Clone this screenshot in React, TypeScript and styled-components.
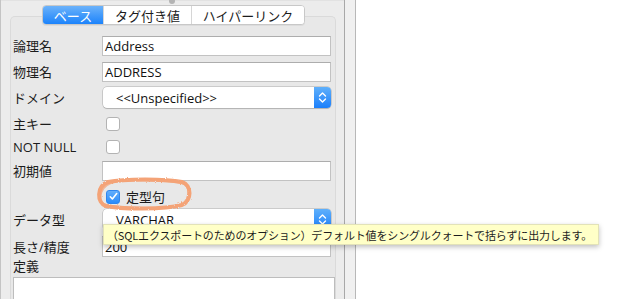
import * as React from "react";
import styled, { createGlobalStyle } from "styled-components";

const GlobalStyle = createGlobalStyle`
    html, body {
        margin: 0;
        padding: 0;
        background: #ffffff;
    }
    body {
        font-family: "Open Sans", "Noto Sans CJK JP", sans-serif;
        font-size: 13px;
        color: #1c1c1c;
    }
`;

const tabs = ["ベース", "タグ付き値", "ハイパーリンク"];
const tabWidths = [60, 87, 112];

const Stepper: React.FC = () => (
    <StepperBox>
        <svg width="9" height="13" viewBox="0 0 9 13">
            <path
                d="M1.5 5 L4.5 2 L7.5 5 M1.5 8 L4.5 11 L7.5 8"
                fill="none"
                stroke="#fff"
                strokeWidth="1.4"
                strokeLinecap="round"
                strokeLinejoin="round"
            />
        </svg>
    </StepperBox>
);

const Check: React.FC<{ checked?: boolean }> = ({ checked }) => (
    <CheckBox $checked={checked}>
        {checked && (
            <svg width="11" height="11" viewBox="0 0 11 11">
                <path
                    d="M2.3 5.8 L4.4 8 L8.7 2.6"
                    fill="none"
                    stroke="#fff"
                    strokeWidth="1.6"
                    strokeLinecap="round"
                    strokeLinejoin="round"
                />
            </svg>
        )}
    </CheckBox>
);

const App: React.FC = () => {
    return (
        <>
            <GlobalStyle />
            <Window>
                <LeftPane>
                    <SplitHandle>
                        <HandleDot />
                    </SplitHandle>
                    <TabView>
                        <Segmented>
                            {tabs.map((t, i) => (
                                <Segment key={t} $active={i === 0} $w={tabWidths[i]}>
                                    {t}
                                </Segment>
                            ))}
                        </Segmented>
                        <GroupBox>
                            <Form>
                                <Row $top={19} $h={20}>
                                    <Label>論理名</Label>
                                    <TextField>Address</TextField>
                                </Row>
                                <Row $top={6} $h={20}>
                                    <Label>物理名</Label>
                                    <TextField>ADDRESS</TextField>
                                </Row>
                                <Row $top={5} $h={21}>
                                    <Label>ドメイン</Label>
                                    <SelectBox>
                                        <SelectText>&lt;&lt;Unspecified&gt;&gt;</SelectText>
                                        <Stepper />
                                    </SelectBox>
                                </Row>
                                <Row $top={4} $h={23}>
                                    <Label>主キー</Label>
                                    <Check />
                                </Row>
                                <Row $top={0} $h={23}>
                                    <Label>NOT NULL</Label>
                                    <Check />
                                </Row>
                                <Row $top={3} $h={20}>
                                    <Label>初期値</Label>
                                    <TextField />
                                </Row>
                                <Row $top={6} $h={19}>
                                    <Label />
                                    <CheckLine>
                                        <Check checked />
                                        <span>定型句</span>
                                    </CheckLine>
                                </Row>
                                <Row $top={3} $h={21}>
                                    <Label>データ型</Label>
                                    <SelectBox>
                                        <SelectText>VARCHAR</SelectText>
                                        <Stepper />
                                    </SelectBox>
                                </Row>
                                <Row $top={6} $h={21}>
                                    <Label>長さ/精度</Label>
                                    <TextField>200</TextField>
                                </Row>
                                <Row $top={1} $h={16}>
                                    <Label>定義</Label>
                                </Row>
                                <TextArea />

                                <Ring width="100" height="34" viewBox="0 0 100 34">
                                    <defs>
                                        <filter id="crayon" x="-10%" y="-25%" width="120%" height="150%">
                                            <feTurbulence type="fractalNoise" baseFrequency="1.3" numOctaves="2" seed="5" />
                                            <feDisplacementMap in="SourceGraphic" scale="2.6" />
                                        </filter>
                                    </defs>
                                    <g filter="url(#crayon)" fill="none" stroke="#f4a377" strokeLinecap="round">
                                        <path
                                            d="M14 5 C30 1.5, 72 1.5, 88 5 C98 8, 98 24, 88 28 C70 32.5, 28 32.5, 12 29 C2.5 26, 2.5 9, 14 5 Z"
                                            strokeWidth="4"
                                        />
                                        <path
                                            d="M20 4 C36 2.5, 74 3, 90 6.5 C97 11, 96 25, 84 29.5 C64 32, 26 31.5, 10 27.5 C3.5 22, 5 8, 22 4.5"
                                            strokeWidth="2.2"
                                            opacity="0.75"
                                        />
                                    </g>
                                </Ring>

                                <Tooltip>
                                    （SQLエクスポートのためのオプション）デフォルト値をシングルクォートで括らずに出力します。
                                </Tooltip>
                            </Form>
                        </GroupBox>
                    </TabView>
                </LeftPane>
                <Divider />
                <RightPane />
            </Window>
        </>
    );
};

const Window = styled.div`
    display: flex;
    width: 623px;
    height: 299px;
    overflow: hidden;
    background: #fff;
`;

const LeftPane = styled.div`
    width: 344px;
    flex: none;
    display: flex;
    flex-direction: column;
    background: #ececec;
    border-left: 1px solid #c4c4c4;
    box-sizing: border-box;
`;

const SplitHandle = styled.div`
    position: relative;
    height: 6px;
    background: #f6f6f6;
    border-bottom: 1px solid #e2e2e2;
    box-sizing: border-box;
`;

const HandleDot = styled.div`
    position: absolute;
    left: 168px;
    top: -2px;
    width: 6px;
    height: 6px;
    border-radius: 50%;
    background: #b4b4b4;
`;

const TabView = styled.div`
    display: flex;
    flex-direction: column;
    padding: 4px 8px 0 9px;
    flex: 1;
`;

const Segmented = styled.div`
    position: relative;
    z-index: 2;
    display: flex;
    align-self: center;
    margin-left: 1px;
    height: 20px;
    background: #fff;
    border: 1px solid #c8c8c8;
    border-radius: 4px;
    box-shadow: 0 1px 0 rgba(0, 0, 0, 0.05);
    box-sizing: border-box;
    overflow: hidden;
`;

const Segment = styled.div<{ $active?: boolean; $w: number }>`
    width: ${(p) => p.$w}px;
    display: flex;
    align-items: center;
    justify-content: center;
    font-family: "Noto Sans CJK JP", sans-serif;
    font-size: 13px;
    line-height: 1;
    padding-top: 1px;
    color: ${(p) => (p.$active ? "#fff" : "#1c1c1c")};
    background: ${(p) =>
        p.$active ? "linear-gradient(#6bb2fa, #1c83fb)" : "#fff"};
    & + & {
        border-left: 1px solid #d6d6d6;
    }
`;

const GroupBox = styled.div`
    margin-top: -9px;
    flex: 1;
    background: #e8e8e8;
    border: 1px solid #dadada;
    border-bottom: none;
    border-radius: 5px 5px 0 0;
    padding: 0 0 0 2px;
    box-sizing: border-box;
`;

const Form = styled.div`
    position: relative;
    display: flex;
    flex-direction: column;
`;

const Row = styled.div<{ $top: number; $h: number }>`
    display: grid;
    grid-template-columns: 89px 229px;
    align-items: center;
    margin-top: ${(p) => p.$top}px;
    height: ${(p) => p.$h}px;
`;

const Label = styled.div`
    font-size: 13px;
    line-height: 16px;
    color: #1c1c1c;
    white-space: nowrap;
`;

const TextField = styled.div`
    height: 100%;
    box-sizing: border-box;
    background: #fff;
    border: 1px solid #c2c2c2;
    border-top-color: #adadad;
    padding: 0 2px;
    display: flex;
    align-items: center;
    font-size: 13px;
    line-height: 16px;
    color: #111;
`;

const SelectBox = styled.div`
    height: 100%;
    margin-left: 1px;
    box-sizing: border-box;
    display: flex;
    align-items: center;
    background: #fff;
    border-radius: 4px;
    box-shadow: 0 0 0 0.5px rgba(0, 0, 0, 0.25), 0 1px 1px rgba(0, 0, 0, 0.12);
    overflow: hidden;
`;

const SelectText = styled.span`
    flex: 1;
    padding-left: 13px;
    font-size: 13px;
    line-height: 16px;
    color: #111;
`;

const StepperBox = styled.div`
    width: 17px;
    height: 100%;
    display: flex;
    align-items: center;
    justify-content: center;
    background: linear-gradient(#5fb0fb, #1b7ffb);
`;

const CheckBox = styled.div<{ $checked?: boolean }>`
    width: 14px;
    height: 14px;
    margin-left: 4px;
    box-sizing: border-box;
    border-radius: 3px;
    display: flex;
    align-items: center;
    justify-content: center;
    background: ${(p) => (p.$checked ? "linear-gradient(#63aefb, #2a8cfb)" : "#fff")};
    border: 1px solid ${(p) => (p.$checked ? "#2f86ee" : "#b3b3b3")};
`;

const CheckLine = styled.div`
    display: flex;
    align-items: center;
    gap: 6px;
    font-size: 13px;
    line-height: 16px;
    color: #1c1c1c;
`;

const TextArea = styled.div`
    margin-top: 3px;
    height: 40px;
    width: 322px;
    box-sizing: border-box;
    background: #fff;
    border: 1px solid #bdbdbd;
`;

const Ring = styled.svg`
    position: absolute;
    left: 81px;
    top: 160px;
    pointer-events: none;
`;

const Tooltip = styled.div`
    position: absolute;
    left: 90px;
    top: 207px;
    height: 19px;
    padding: 0 6px 0 3px;
    display: flex;
    align-items: center;
    white-space: nowrap;
    font-family: "Noto Sans CJK JP", sans-serif;
    font-size: 11px;
    line-height: 14px;
    letter-spacing: -0.15px;
    color: #1c1c1c;
    background: #ffffc7;
    border: 1px solid #e2e2b8;
    box-shadow: 0 2px 5px rgba(0, 0, 0, 0.25);
    z-index: 5;
`;

const Divider = styled.div`
    width: 12px;
    flex: none;
    background: #f0f0f0;
    border-left: 1px solid #a8a8a8;
    border-right: 1px solid #b8b8b8;
    box-sizing: border-box;
`;

const RightPane = styled.div`
    flex: 1;
    background: #fff;
`;

export default App;
